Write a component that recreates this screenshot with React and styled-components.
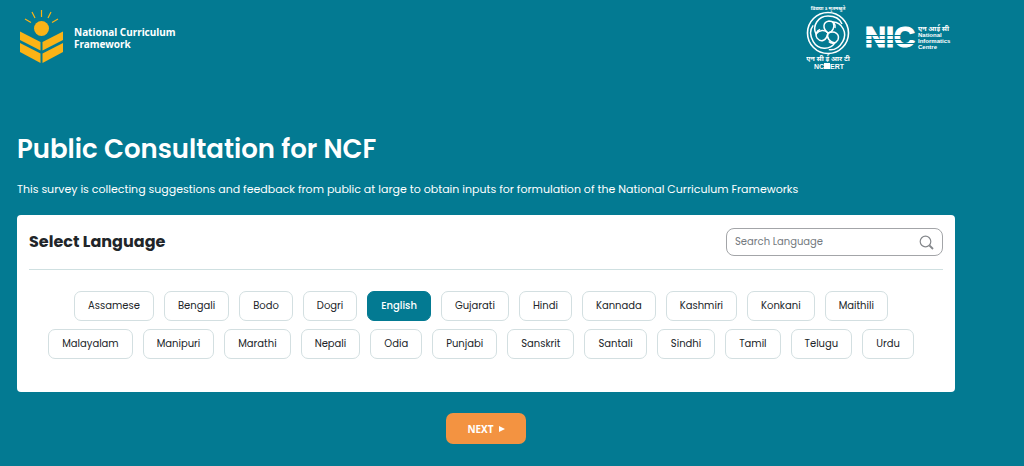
import React, { useState } from "react";
import styled, { createGlobalStyle } from "styled-components";

const teal = "#037a92";
const display = `Poppins, Inter, "Open Sans", sans-serif`;
const humanist = `"Noto Sans", "Open Sans", sans-serif`;

const GlobalStyle = createGlobalStyle`
  *, *::before, *::after { box-sizing: border-box; }
  html { background: ${teal}; }
  body { margin: 0; font-family: ${display}; color: #212529; }
`;

const Page = styled.div`
  min-height: 100vh;
  background: ${teal};
  padding: 4px 69px 22px 17px;
`;

const Header = styled.header`
  display: flex;
  justify-content: space-between;
  align-items: flex-start;
  height: 66px;
`;

const Brand = styled.a`
  display: flex;
  align-items: center;
  gap: 11px;
  padding: 5px 0 0 3px;
  color: #fff;
  text-decoration: none;
  font: 700 10px/12px ${humanist};
`;

const BrandName = styled.span`
  padding-top: 4px;
`;

const BrandLine = styled.span`
  display: block;
`;

const Partners = styled.div`
  display: flex;
  align-items: flex-start;
  gap: 13px;
`;

const Seal = styled.svg`
  display: block;
  width: 46px;
  height: 68px;
`;

const NicLogo = styled.svg`
  display: block;
  width: 90px;
  height: 36px;
  margin-top: 16px;
`;

const Title = styled.h1`
  margin: 60px 0 0;
  color: #fff;
  font-size: 26px;
  line-height: 38px;
  font-weight: 600;
`;

const Lead = styled.p`
  margin: 12px 0 0;
  color: #fff;
  font-size: 11px;
  line-height: 18px;
`;

const Card = styled.main`
  margin-top: 17px;
  padding: 13px 12px 33px;
  border-radius: 4px;
  background: #fff;
`;

const CardHeader = styled.div`
  display: flex;
  justify-content: space-between;
  align-items: center;
  padding-bottom: 13px;
  border-bottom: 1px solid #cfe0e1;
`;

const CardTitle = styled.h2`
  margin: 0;
  font-size: 16px;
  line-height: 24px;
  font-weight: 700;
`;

const SearchBox = styled.label`
  display: flex;
  align-items: center;
  width: 217px;
  height: 28px;
  padding: 0 8px;
  border: 1px solid #a3a5a8;
  border-radius: 8px;
`;

const SearchInput = styled.input`
  flex: 1;
  min-width: 0;
  padding: 0;
  border: 0;
  outline: 0;
  background: transparent;
  color: #212529;
  font: 400 10px/16px ${display};
  &::placeholder { color: #747a80; opacity: 1; }
`;

const Languages = styled.div`
  display: flex;
  flex-wrap: wrap;
  justify-content: center;
  gap: 8px 0;
  padding-top: 21px;
`;

const Chip = styled.button`
  height: 30px;
  margin-right: 10px;
  padding: 0 13px;
  border: 1px solid ${(p) => (p.$active ? teal : "#d3dfe1")};
  border-radius: 7px;
  background: ${(p) => (p.$active ? teal : "#fff")};
  color: ${(p) => (p.$active ? "#fff" : "#212529")};
  font: ${(p) => (p.$active ? 500 : 400)} 10px/16px ${display};
  cursor: pointer;
`;

const Actions = styled.div`
  display: flex;
  justify-content: center;
  padding-top: 21px;
`;

const NextButton = styled.button`
  display: flex;
  align-items: center;
  justify-content: center;
  gap: 5px;
  width: 80px;
  height: 31px;
  padding: 0;
  border: 0;
  border-radius: 7px;
  background: #f39341;
  color: #fff;
  font: 700 10px/16px ${humanist};
  cursor: pointer;
`;

const languages = [
  "Assamese", "Bengali", "Bodo", "Dogri", "English", "Gujarati", "Hindi", "Kannada",
  "Kashmiri", "Konkani", "Maithili", "Malayalam", "Manipuri", "Marathi", "Nepali",
  "Odia", "Punjabi", "Sanskrit", "Santali", "Sindhi", "Tamil", "Telugu", "Urdu",
];

function BrandMark() {
  return (
    <svg width="43" height="54" viewBox="0 0 43 54" aria-hidden="true">
      <g fill="#fbb316">
        <circle cx="21.5" cy="19.5" r="7.5" />
        <path d="M0 22.500 20.500 33V41.500L0 31Z" />
        <path d="M43 22.500 22.500 33V41.500L43 31Z" />
        <path d="M0 34 20.500 44.500V54L0 43Z" />
        <path d="M43 34 22.500 44.500V54L43 43Z" />
      </g>
      <path
        d="M21.500 1V8M12 3 15 9M31 3 28 9M5 10 11 13.500M38 10 32 13.500"
        stroke="#fbb316"
        strokeWidth="1.200"
      />
    </svg>
  );
}

function NcertSeal() {
  return (
    <Seal viewBox="0 0 46 68" role="img" aria-label="NCERT">
      <g fill="#fff" textAnchor="middle" fontFamily='"Noto Sans", sans-serif' fontWeight="700">
        <text x="22" y="6" fontSize="5">विद्यया ऽ मृतमश्नुते</text>
        <text x="22" y="57" fontSize="7">एन सी ई आर टी</text>
      </g>
      <g fill="#fff" fontFamily='"Liberation Sans", sans-serif' fontWeight="700" fontSize="7">
        <text x="8" y="65">NC</text>
        <rect x="18" y="59" width="6" height="6" />
        <text x="24" y="65">ERT</text>
      </g>
      <g fill="none" stroke="#fff">
        <circle cx="22" cy="29" r="20.500" strokeWidth="1.600" />
        {[0, 120, 240].map((angle) => (
          <g key={angle} transform={`rotate(${angle} 22 29)`}>
            <path d="M22 29C19 25 13 26 10 30C6 22 12 12 22 12C29 12 34 15 36 20" strokeWidth="1.500" />
            <path d="M22 29C16 24 17 18 23 17C27 17 30 20 29 24" strokeWidth="1.500" />
          </g>
        ))}
      </g>
    </Seal>
  );
}

function Nic() {
  return (
    <NicLogo viewBox="0 0 90 36" role="img" aria-label="National Informatics Centre">
      <text x="0" y="27" fill="#fff" stroke="#fff" strokeWidth="1.200" fontFamily='"Liberation Sans", sans-serif' fontSize="29" fontWeight="700">NIC</text>
      <path d="M0 15.500H51M0 19.500H51M0 23.500H51" stroke={teal} strokeWidth="1" />
      <g fill="#fff" fontFamily='"Liberation Sans", sans-serif' fontSize="6" fontWeight="700">
        <text x="53" y="11" fontFamily='"Noto Sans", sans-serif' fontSize="7">एन आई सी</text>
        <text x="53" y="17">National</text>
        <text x="53" y="23">Informatics</text>
        <text x="53" y="29">Centre</text>
      </g>
    </NicLogo>
  );
}

export default function App() {
  const [selected, setSelected] = useState("English");
  const [query, setQuery] = useState("");
  const shown = languages.filter((l) => l.toLowerCase().includes(query.toLowerCase()));

  return (
    <Page>
      <GlobalStyle />
      <Header>
        <Brand href="#">
          <BrandMark />
          <BrandName>
            <BrandLine>National Curriculum</BrandLine>
            <BrandLine>Framework</BrandLine>
          </BrandName>
        </Brand>
        <Partners>
          <NcertSeal />
          <Nic />
        </Partners>
      </Header>
      <Title>Public Consultation for NCF</Title>
      <Lead>
        This survey is collecting suggestions and feedback from public at large to obtain inputs
        for formulation of the National Curriculum Frameworks
      </Lead>
      <Card>
        <CardHeader>
          <CardTitle>Select Language</CardTitle>
          <SearchBox>
            <SearchInput
              type="text"
              aria-label="Search Language"
              placeholder="Search Language"
              value={query}
              onChange={(e) => setQuery(e.target.value)}
            />
            <svg width="15" height="15" viewBox="0 0 15 15" fill="none" stroke="#85888c" aria-hidden="true">
              <circle cx="6.500" cy="6.500" r="5.300" strokeWidth="1.200" />
              <path d="M10.500 10.500 14 14" strokeWidth="1.800" />
            </svg>
          </SearchBox>
        </CardHeader>
        <Languages>
          {shown.map((name) => (
            <Chip
              key={name}
              type="button"
              $active={name === selected}
              aria-pressed={name === selected}
              onClick={() => setSelected(name)}
            >
              {name}
            </Chip>
          ))}
        </Languages>
      </Card>
      <Actions>
        <NextButton type="button">
          NEXT
          <svg width="6" height="6" viewBox="0 0 6 6" aria-hidden="true">
            <path d="M0 0 6 3 0 6Z" fill="#fff" />
          </svg>
        </NextButton>
      </Actions>
    </Page>
  );
}
